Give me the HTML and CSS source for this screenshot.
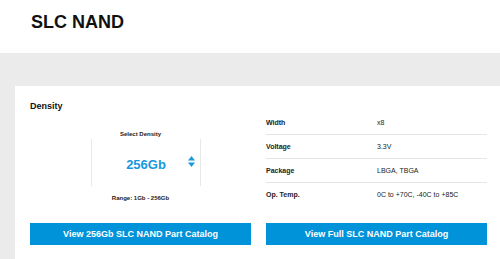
FILE: index.html
```html
<!DOCTYPE html>
<html>
    <head>
        <title>SLC NAND</title>
        <meta http-equiv="Content-Type" content="text/html; charset=utf-8"/>
        <link rel="stylesheet" href="styles.css">
    </head>
    <body>

    <div id="header">
        <h1 class="pageTitle">SLC NAND</h1>
    </div>

    <div id="main">
        <div class="card">
            <h2 class="cardTitle">Density</h2>

            <div class="cardGrid">
                <div class="densityPicker">
                    <div class="smallLabel">Select Density</div>
                    <div class="selectBox">
                        <span class="selectValue">256Gb</span>
                        <svg class="selectArrows" width="7" height="11" viewBox="0 0 7 11">
                            <polygon points="3.5,0 7,4.5 0,4.5"/>
                            <polygon points="0,6.5 7,6.5 3.5,11"/>
                        </svg>
                    </div>
                    <div class="smallLabel rangeLabel">Range: 1Gb - 256Gb</div>
                </div>

                <table class="specTable" cellspacing="0" cellpadding="0">
                    <tbody>
                        <tr>
                            <td class="specName">Width</td>
                            <td>x8</td>
                        </tr>
                        <tr>
                            <td class="specName">Voltage</td>
                            <td>3.3V</td>
                        </tr>
                        <tr>
                            <td class="specName">Package</td>
                            <td>LBGA, TBGA</td>
                        </tr>
                        <tr>
                            <td class="specName">Op. Temp.</td>
                            <td>0C to +70C, -40C to +85C</td>
                        </tr>
                    </tbody>
                </table>

                <a class="button" href="#">View 256Gb SLC NAND Part Catalog</a>
                <a class="button" href="#">View Full SLC NAND Part Catalog</a>
            </div>
        </div>
    </div>

    </body>
</html>
```

FILE: styles.css
```css
body {
    font-family: "Liberation Sans", Arial, sans-serif;
    margin: 0;
    padding: 0;
    color: #111;
    background-color: white;
}

#header {
    height: 53px;
    padding-left: 31px;
    box-sizing: border-box;
}

.pageTitle {
    margin: 0;
    padding-top: 11px;
    font-size: 18px;
    line-height: 22px;
    font-weight: bold;
}

#main {
    background-color: #ebebeb;
    padding: 33px 0 0 15px;
    height: 206px;
    box-sizing: border-box;
}

.card {
    background-color: white;
    padding: 15px 13px 20px 15px;
    height: 100%;
    box-sizing: border-box;
}

.cardTitle {
    margin: 0;
    font-size: 9px;
    line-height: 10px;
    font-weight: bold;
}

.cardGrid {
    display: grid;
    grid-template-columns: 221px 221px;
    column-gap: 15px;
    row-gap: 17px;
}

/**** DENSITY PICKER ****/

.densityPicker {
    display: flex;
    flex-direction: column;
}

.smallLabel {
    font-size: 6px;
    line-height: 8px;
    font-weight: bold;
    text-align: center;
    color: #222;
    margin-top: 19px;
}

.rangeLabel {
    margin-top: 8px;
}

.selectBox {
    position: relative;
    margin: 1px 0 0 61px;
    width: 110px;
    height: 47px;
    box-sizing: border-box;
    border-left: 1px solid #e8e8e8;
    border-right: 1px solid #e8e8e8;
    display: flex;
    align-items: center;
    justify-content: center;
}

.selectValue {
    color: #1898de;
    font-size: 13px;
    font-weight: bold;
    padding-top: 3px;
}

.selectArrows {
    position: absolute;
    right: 5px;
    top: 17px;
    fill: #1898de;
}

/**** SPECS ****/

.specTable {
    width: 221px;
    border-collapse: collapse;
    font-size: 7px;
    color: #222;
}

.specTable td {
    height: 23px;
    padding: 0;
    vertical-align: middle;
    border-bottom: 1px solid #e5e5e5;
}

.specTable tr:last-child td {
    border-bottom: none;
}

.specName {
    width: 111px;
    font-weight: bold;
}

/**** BUTTONS ****/

.button {
    display: block;
    height: 22px;
    line-height: 22px;
    background-color: #0093da;
    color: white;
    font-size: 9px;
    font-weight: bold;
    text-align: center;
    text-decoration: none;
}
```
